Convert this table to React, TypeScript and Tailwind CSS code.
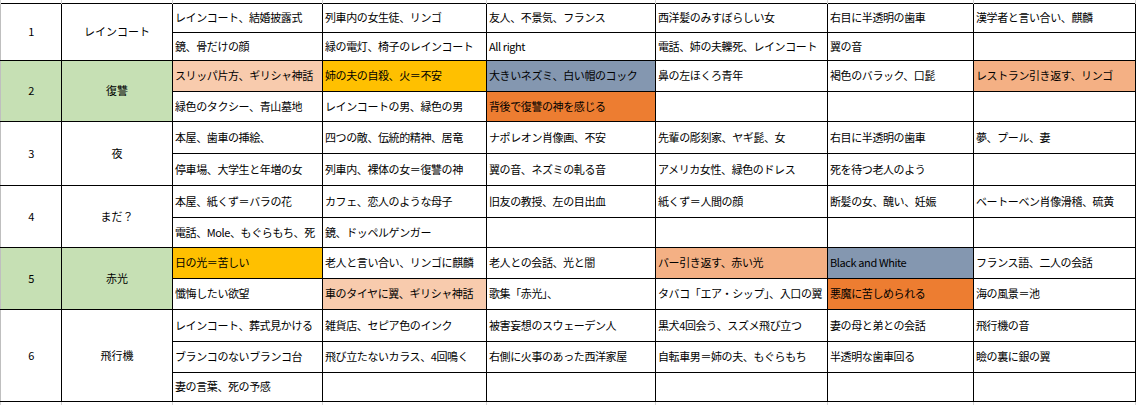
import React from "react";

type Cell = { t: string; c?: string };
type Group = { no: string; title: string; green?: boolean; rows: (Cell | string)[][] };

const PEACH = "bg-[#f8cbad]";
const GOLD = "bg-[#ffc000]";
const SLATE = "bg-[#8497b0]";
const ORANGE = "bg-[#ed7d31]";
const SALMON = "bg-[#f4b084]";

const groups: Group[] = [
  {
    no: "1",
    title: "レインコート",
    rows: [
      ["レインコート、結婚披露式", "列車内の女生徒、リンゴ", "友人、不景気、フランス", "西洋髪のみすぼらしい女", "右目に半透明の歯車", "漢学者と言い合い、麒麟"],
      ["鏡、骨だけの顔", "緑の電灯、椅子のレインコート", "All right", "電話、姉の夫轢死、レインコート", "翼の音", ""],
    ],
  },
  {
    no: "2",
    title: "復讐",
    green: true,
    rows: [
      [
        { t: "スリッパ片方、ギリシャ神話", c: PEACH },
        { t: "姉の夫の自殺、火＝不安", c: GOLD },
        { t: "大きいネズミ、白い帽のコック", c: SLATE },
        "鼻の左ほくろ青年",
        "褐色のバラック、口髭",
        { t: "レストラン引き返す、リンゴ", c: SALMON },
      ],
      ["緑色のタクシー、青山墓地", "レインコートの男、緑色の男", { t: "背後で復讐の神を感じる", c: ORANGE }, "", "", ""],
    ],
  },
  {
    no: "3",
    title: "夜",
    rows: [
      ["本屋、歯車の挿絵、", "四つの敵、伝統的精神、居竜", "ナポレオン肖像画、不安", "先輩の彫刻家、ヤギ髭、女", "右目に半透明の歯車", "夢、プール、妻"],
      ["停車場、大学生と年増の女", "列車内、裸体の女＝復讐の神", "翼の音、ネズミの軋る音", "アメリカ女性、緑色のドレス", "死を待つ老人のよう", ""],
    ],
  },
  {
    no: "4",
    title: "まだ？",
    rows: [
      ["本屋、紙くず＝バラの花", "カフェ、恋人のような母子", "旧友の教授、左の目出血", "紙くず＝人間の顔", "断髪の女、醜い、妊娠", "ベートーベン肖像滑稽、硫黄"],
      ["電話、Mole、もぐらもち、死", "鏡、ドッペルゲンガー", "", "", "", ""],
    ],
  },
  {
    no: "5",
    title: "赤光",
    green: true,
    rows: [
      [
        { t: "日の光＝苦しい", c: GOLD },
        "老人と言い合い、リンゴに麒麟",
        "老人との会話、光と闇",
        { t: "バー引き返す、赤い光", c: SALMON },
        { t: "Black and White", c: SLATE },
        "フランス語、二人の会話",
      ],
      [
        "懺悔したい欲望",
        { t: "車のタイヤに翼、ギリシャ神話", c: PEACH },
        "歌集「赤光」、",
        "タバコ「エア・シップ」、入口の翼",
        { t: "悪魔に苦しめられる", c: ORANGE },
        "海の風景＝池",
      ],
    ],
  },
  {
    no: "6",
    title: "飛行機",
    rows: [
      ["レインコート、葬式見かける", "雑貨店、セピア色のインク", "被害妄想のスウェーデン人", "黒犬4回会う、スズメ飛び立つ", "妻の母と弟との会話", "飛行機の音"],
      ["ブランコのないブランコ台", "飛び立たないカラス、4回鳴く", "右側に火事のあった西洋家屋", "自転車男＝姉の夫、もぐらもち", "半透明な歯車回る", "瞼の裏に銀の翼"],
      ["妻の言葉、死の予感", "", "", "", "", ""],
    ],
  },
];

// row heights in px, top to bottom, matched to the sheet's gridlines
const heights = [29, 28, 31, 30, 32, 32, 32, 30, 31, 31, 32, 31, 29];
const widths = [61, 111, 150, 164, 169, 172, 146, 162];

const font = { fontFamily: '"Noto Sans CJK JP", "Liberation Sans", sans-serif' };

export default function App() {
  let r = 0;
  return (
    <div className="w-[1139px] h-[405px] bg-white overflow-hidden text-black" style={font}>
      <table className="table-fixed border-collapse w-[1136px] text-[11px] tracking-[-0.4px] leading-none">
        <colgroup>
          {widths.map((w, i) => (
            <col key={i} style={{ width: w }} />
          ))}
        </colgroup>
        <tbody>
          {/* sliver of the row above */}
          <tr className="h-[3px]">
            {widths.map((_, i) => (
              <td key={i} className="p-0 border-x border-[#d4d4d4]" />
            ))}
          </tr>
          {groups.map((g) =>
            g.rows.map((row, ri) => {
              const h = heights[r++];
              return (
                <tr key={g.no + ri} style={{ height: h }}>
                  {ri === 0 && (
                    <>
                      <td
                        rowSpan={g.rows.length}
                        className={`p-0 text-center border border-black border-l-[#bfbfbf] ${g.green ? "bg-[#c6e0b4]" : ""}`}
                      >
                        {g.no}
                      </td>
                      <td
                        rowSpan={g.rows.length}
                        className={`p-0 text-center tracking-normal border border-black ${g.green ? "bg-[#c6e0b4]" : ""}`}
                      >
                        {g.title}
                      </td>
                    </>
                  )}
                  {row.map((cell, ci) => {
                    const c = typeof cell === "string" ? { t: cell } : cell;
                    return (
                      <td
                        key={ci}
                        className={`px-[2px] py-0 border border-black whitespace-nowrap overflow-hidden ${c.c ?? ""}`}
                      >
                        {c.t}
                      </td>
                    );
                  })}
                </tr>
              );
            })
          )}
          <tr className="h-[4px]">
            {widths.map((_, i) => (
              <td key={i} className="p-0 border-x border-[#d4d4d4]" />
            ))}
          </tr>
        </tbody>
      </table>
    </div>
  );
}
